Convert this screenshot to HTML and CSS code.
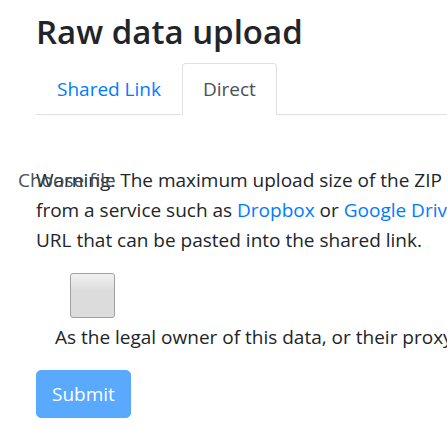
FILE: index.html
```html
<!DOCTYPE html>
<html lang="en">
<head>
  <meta charset="UTF-8" />
  <meta name="viewport" content="width=device-width, initial-scale=1" />
  <title>Raw data upload</title>
  <link rel="stylesheet" href="styles.css">
</head>
<body>
  <div class="container">
    <h1>Raw data upload</h1>

    <!-- Tabs -->
    <ul class="nav-tabs">
      <li><a class="nav-link" href="#">Shared Link</a></li>
      <li><a class="nav-link active" href="#">Direct</a></li>
    </ul>

    <div class="tab-pane">
      <div class="upload-note">
        <span class="file-label">Choose file</span>
        <p class="warning">Warning: The maximum upload size of the ZIP file is limited. Larger files should be uploaded<br>from a service such as <a href="#">Dropbox</a> or <a href="#">Google Drive</a> which will give you a<br>URL that can be pasted into the shared link.</p>
      </div>

      <div class="form-check">
        <input type="checkbox" class="check-box" id="ownerCheck">
        <label class="check-label" for="ownerCheck">As the legal owner of this data, or their proxy, I confirm that I have permission to share it.</label>
      </div>

      <button class="btn-submit" disabled>Submit</button>
    </div>
  </div>
</body>
</html>
```

FILE: styles.css
```css
body {
  margin: 0;
  font-family: 'Open Sans', 'Noto Sans', sans-serif;
  font-size: 19px;
  line-height: 30px;
  color: #212529;
  background: #fff;
  overflow: hidden;
}
.container {
  width: 900px;
  padding-left: 36px;
}
h1 {
  font-size: 33px;
  font-weight: 600;
  line-height: 44px;
  margin: 10px 0 9px;
}
a {
  color: #007bff;
  text-decoration: none;
}
.nav-tabs {
  display: flex;
  list-style: none;
  margin: 0;
  padding: 0;
  border-bottom: 1px solid #dee2e6;
}
.nav-link {
  display: block;
  padding: 10px 20px;
  border: 1px solid transparent;
  border-top-left-radius: 4px;
  border-top-right-radius: 4px;
  margin-bottom: -1px;
}
.nav-link.active {
  color: #495057;
  background: #fff;
  border-color: #dee2e6 #dee2e6 #fff;
}
.tab-pane {
  padding-top: 50px;
}
.upload-note {
  position: relative;
}
.file-label {
  position: absolute;
  left: -18px;
  top: 0;
  color: #495057;
}
.warning {
  margin: 0;
  white-space: nowrap;
}
.form-check {
  margin-top: 18px;
  padding-left: 34px;
}
.check-box {
  appearance: none;
  display: block;
  width: 45px;
  height: 45px;
  margin: 0;
  border: 1px solid #a0a0a0;
  border-radius: 3px;
  background: linear-gradient(#f1f1f1, #dcdcdc 40%, #dcdcdc);
}
.check-label {
  display: block;
  margin: 4px 0 0 -15px;
  white-space: nowrap;
}
.btn-submit {
  display: block;
  margin-top: 18px;
  font-family: inherit;
  font-size: 19px;
  line-height: 30px;
  padding: 8px 15px;
  color: #fff;
  background: #59a9ff;
  border: 1px solid #59a9ff;
  border-radius: 5px;
}
```
